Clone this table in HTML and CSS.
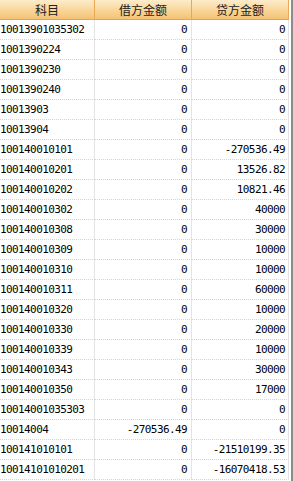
FILE: index.html
```html
<!DOCTYPE html>
<html>
<head>
<meta charset="utf-8">
<link rel="stylesheet" href="styles.css">
</head>
<body>
<div class="frame">
  <div class="grid">
    <div class="hd c1">科目</div><div class="hd c2">借方金额</div><div class="hd c3">贷方金额</div>
    <div class="cell c1">10013901035302</div><div class="cell c2 num">0</div><div class="cell c3 num">0</div>
    <div class="cell c1">1001390224</div><div class="cell c2 num">0</div><div class="cell c3 num">0</div>
    <div class="cell c1">1001390230</div><div class="cell c2 num">0</div><div class="cell c3 num">0</div>
    <div class="cell c1">1001390240</div><div class="cell c2 num">0</div><div class="cell c3 num">0</div>
    <div class="cell c1">10013903</div><div class="cell c2 num">0</div><div class="cell c3 num">0</div>
    <div class="cell c1">10013904</div><div class="cell c2 num">0</div><div class="cell c3 num">0</div>
    <div class="cell c1">100140010101</div><div class="cell c2 num">0</div><div class="cell c3 num">-270536.49</div>
    <div class="cell c1">100140010201</div><div class="cell c2 num">0</div><div class="cell c3 num">13526.82</div>
    <div class="cell c1">100140010202</div><div class="cell c2 num">0</div><div class="cell c3 num">10821.46</div>
    <div class="cell c1">100140010302</div><div class="cell c2 num">0</div><div class="cell c3 num">40000</div>
    <div class="cell c1">100140010308</div><div class="cell c2 num">0</div><div class="cell c3 num">30000</div>
    <div class="cell c1">100140010309</div><div class="cell c2 num">0</div><div class="cell c3 num">10000</div>
    <div class="cell c1">100140010310</div><div class="cell c2 num">0</div><div class="cell c3 num">10000</div>
    <div class="cell c1">100140010311</div><div class="cell c2 num">0</div><div class="cell c3 num">60000</div>
    <div class="cell c1">100140010320</div><div class="cell c2 num">0</div><div class="cell c3 num">10000</div>
    <div class="cell c1">100140010330</div><div class="cell c2 num">0</div><div class="cell c3 num">20000</div>
    <div class="cell c1">100140010339</div><div class="cell c2 num">0</div><div class="cell c3 num">10000</div>
    <div class="cell c1">100140010343</div><div class="cell c2 num">0</div><div class="cell c3 num">30000</div>
    <div class="cell c1">100140010350</div><div class="cell c2 num">0</div><div class="cell c3 num">17000</div>
    <div class="cell c1">10014001035303</div><div class="cell c2 num">0</div><div class="cell c3 num">0</div>
    <div class="cell c1">10014004</div><div class="cell c2 num">-270536.49</div><div class="cell c3 num">0</div>
    <div class="cell c1">100141010101</div><div class="cell c2 num">0</div><div class="cell c3 num">-21510199.35</div>
    <div class="cell c1">10014101010201</div><div class="cell c2 num">0</div><div class="cell c3 num">-16070418.53</div>
  </div>
  <div class="edge"></div>
</div>
</body>
</html>
```
FILE: styles.css
```css
html, body {
  margin: 0;
  padding: 0;
  background: #ffffff;
  overflow: hidden;
}
.frame {
  display: flex;
  width: 293px;
  height: 481px;
  overflow: hidden;
}
.grid {
  display: grid;
  grid-template-columns: 95px 97px 97px;
  grid-auto-rows: 20px;
  width: 289px;
  flex: none;
}
.edge {
  flex: none;
  width: 4px;
  border-left: 2px solid #ffffff;
  background: #8c8c8c;
  box-sizing: border-box;
}
.hd {
  font-family: "Noto Sans CJK SC", "Noto Sans", sans-serif;
  font-size: 12px;
  color: #222;
  background: linear-gradient(to bottom, #fdeccc 0%, #fad9a0 45%, #f5c274 100%);
  border-right: 1px solid #eaa855;
  border-bottom: 1px solid #e9a24a;
  display: flex;
  align-items: center;
  justify-content: center;
  line-height: 19px;
  box-sizing: border-box;
}
.cell {
  font-family: "DejaVu Sans Mono", "Liberation Mono", monospace;
  font-size: 11px;
  letter-spacing: -0.6px;
  color: #000;
  border-right: 1px solid #e3e3e3;
  border-bottom: 1px dotted #d4d4d4;
  box-sizing: border-box;
  display: flex;
  align-items: center;
  white-space: nowrap;
  padding-left: 0;
}
.num {
  justify-content: flex-end;
  padding-right: 4px;
}
.c3.num {
  padding-right: 3px;
}
```
